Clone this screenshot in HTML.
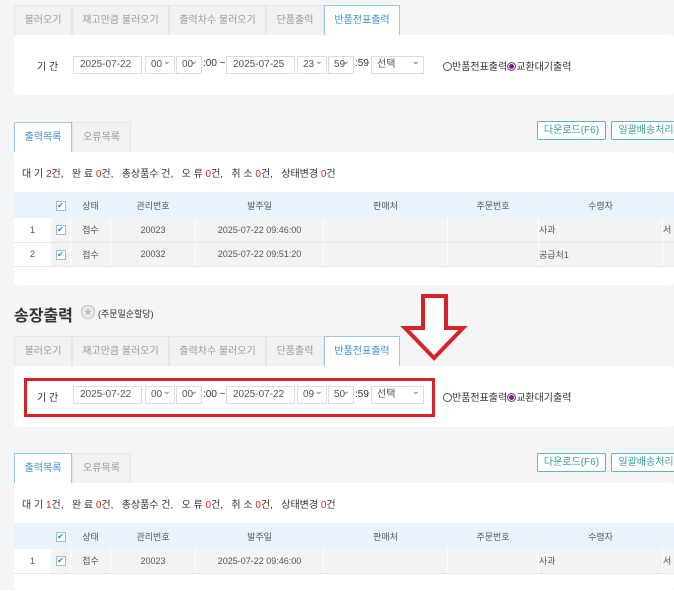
<!DOCTYPE html>
<html><head><meta charset="utf-8"><style>
*{margin:0;padding:0;box-sizing:border-box}
body{width:674px;height:600px;overflow:hidden;background:#fff;font-family:"Liberation Sans","Noto Sans CJK KR",sans-serif;font-size:10px;color:#333;position:relative}
.a{position:absolute}
.bg{background:#f4f5f7}
.tab{position:absolute;height:30px;border:1px solid #e3e5e8;border-bottom:none;background:#f1f2f4;color:#999;font-size:10px;line-height:30px;text-align:center}
.tab.on{background:#fff;color:#3a8fd0;border-color:#9cc6e6}
.panel{position:absolute;background:#fff;border-radius:3px}
.inp{position:absolute;height:18px;border:1px solid #dcdcdc;background:#fff;color:#555;font-size:10px;line-height:16px;padding-left:6px}
.sel{position:absolute;height:18px;border:1px solid #dcdcdc;background:#fff;color:#555;font-size:10px;line-height:16px;padding-left:5px}
.sel:after{content:"⌄";position:absolute;right:3px;top:-3px;font-size:10px;color:#777}
.btn{position:absolute;height:19px;border:1px solid #5fb8b4;color:#3a9a96;background:#fff;font-size:10px;line-height:17px;text-align:center;border-radius:2px}
.r{color:#d22}
table{position:absolute;border-collapse:collapse;font-size:9px;color:#555;table-layout:fixed}
th{background:#eaf3fb;height:26px;font-weight:normal;color:#555;border-left:1px solid #f0f5fa}
td{height:24px;text-align:center;background:#f3f3f3;border-bottom:1px solid #e6e6e6;border-left:1px solid #fff}
td.w{background:#fff}
.cb{display:inline-block;width:10px;height:10px;border:1px solid #9cbbd6;background:#fff;color:#3a7fc0;font-size:8px;line-height:8px;text-align:center}
.rad{display:inline-block;width:9px;height:9px;border:1px solid #555;border-radius:50%;vertical-align:-1px}
</style></head><body>
<div class="a bg" style="left:0;top:0;width:674px;height:590px"></div>

<!-- section 1 -->
<div class="tab" style="left:14px;top:5px;width:58px">불러오기</div>
<div class="tab" style="left:72px;top:5px;width:97px">재고만큼 불러오기</div>
<div class="tab" style="left:169px;top:5px;width:97px">출력차수 불러오기</div>
<div class="tab" style="left:266px;top:5px;width:58px">단품출력</div>
<div class="tab on" style="left:324px;top:5px;width:76px">반품전표출력</div>
<div class="panel" style="left:14px;top:35px;width:660px;height:60px"></div>
<div class="a" style="left:37px;top:58px">기 간</div>
<div class="inp" style="left:73px;top:56px;width:69px">2025-07-22</div>
<div class="sel" style="left:145px;top:56px;width:30px">00</div>
<div class="a" style="left:176px;top:58px">:</div>
<div class="sel" style="left:176px;top:56px;width:26px">00</div>
<div class="a" style="left:203px;top:58px">:00 ~</div>
<div class="inp" style="left:226px;top:56px;width:69px">2025-07-25</div>
<div class="sel" style="left:297px;top:56px;width:30px">23</div>
<div class="sel" style="left:328px;top:56px;width:26px">59</div>
<div class="a" style="left:355px;top:58px">:59</div>
<div class="sel" style="left:371px;top:56px;width:53px">선택</div>
<div class="a" style="left:443px;top:58px;color:#333"><span class="rad"></span>반품전표출력<span class="rad" style="background:#7a1f8a;box-shadow:inset 0 0 0 1px #fff"></span>교환대기출력</div>

<div class="tab on" style="left:14px;top:122px;width:58px">출력목록</div>
<div class="tab" style="left:72px;top:122px;width:59px">오류목록</div>
<div class="btn" style="left:537px;top:121px;width:69px">다운로드(F6)</div>
<div class="btn" style="left:611px;top:121px;width:70px">일괄배송처리</div>
<div class="panel" style="left:14px;top:152px;width:660px;height:133px"></div>
<div class="a" style="left:22px;top:165px">대 기 <span class="r">2</span>건, &nbsp;&nbsp;완 료 <span class="r">0</span>건, &nbsp;&nbsp;총상품수 건, &nbsp;&nbsp;오 류 <span class="r">0</span>건, &nbsp;&nbsp;취 소 <span class="r">0</span>건, &nbsp;&nbsp;상태변경 <span class="r">0</span>건</div>
<table style="left:14px;top:192px;width:670px">
<colgroup><col width="36"><col width="20"><col width="40"><col width="85"><col width="128"><col width="124"><col width="91"><col width="124"><col width="22"></colgroup>
<tr><th></th><th><span class="cb">✔</span></th><th>상태</th><th>관리번호</th><th>발주일</th><th>판매처</th><th>주문번호</th><th>수령자</th><th></th></tr>
<tr><td class="w">1</td><td><span class="cb">✔</span></td><td>접수</td><td>20023</td><td>2025-07-22 09:46:00</td><td></td><td></td><td style="text-align:left">사과</td><td style="text-align:left">서</td></tr>
<tr><td class="w">2</td><td><span class="cb">✔</span></td><td>접수</td><td>20032</td><td>2025-07-22 09:51:20</td><td></td><td></td><td style="text-align:left">공급처1</td><td></td></tr>
</table>

<!-- section 2 -->
<div class="a" style="left:14px;top:302px;font-size:16px;font-weight:bold;color:#333">송장출력</div>
<div class="a" style="left:81px;top:305px;width:14px;height:14px;border:1px solid #bbb;border-radius:50%;background:#eee;color:#bbb;font-size:9px;line-height:12px;text-align:center">★</div>
<div class="a" style="left:98px;top:307px;font-size:9px">(주문일순할당)</div>
<div class="tab" style="left:14px;top:336px;width:58px">불러오기</div>
<div class="tab" style="left:72px;top:336px;width:97px">재고만큼 불러오기</div>
<div class="tab" style="left:169px;top:336px;width:97px">출력차수 불러오기</div>
<div class="tab" style="left:266px;top:336px;width:58px">단품출력</div>
<div class="tab on" style="left:324px;top:336px;width:76px">반품전표출력</div>
<div class="panel" style="left:14px;top:366px;width:660px;height:61px"></div>
<div class="a" style="left:37px;top:389px">기 간</div>
<div class="inp" style="left:73px;top:386px;width:69px">2025-07-22</div>
<div class="sel" style="left:145px;top:386px;width:30px">00</div>
<div class="sel" style="left:176px;top:386px;width:26px">00</div>
<div class="a" style="left:203px;top:389px">:00 ~</div>
<div class="inp" style="left:226px;top:386px;width:69px">2025-07-22</div>
<div class="sel" style="left:297px;top:386px;width:30px">09</div>
<div class="sel" style="left:328px;top:386px;width:26px">50</div>
<div class="a" style="left:355px;top:389px">:59</div>
<div class="sel" style="left:371px;top:386px;width:53px">선택</div>
<div class="a" style="left:443px;top:389px;color:#333"><span class="rad"></span>반품전표출력<span class="rad" style="background:#7a1f8a;box-shadow:inset 0 0 0 1px #fff"></span>교환대기출력</div>
<div class="a" style="left:24px;top:378px;width:411px;height:39px;border:3px solid #d7222a"></div>
<svg class="a" style="left:400px;top:292px" width="68" height="70"><path d="M23 4 H46 V36 H63 L34 66 L5 36 H23 Z" fill="#fff" stroke="#d7222a" stroke-width="4" stroke-linejoin="miter"/></svg>

<div class="tab on" style="left:14px;top:453px;width:58px">출력목록</div>
<div class="tab" style="left:72px;top:453px;width:59px">오류목록</div>
<div class="btn" style="left:537px;top:453px;width:69px">다운로드(F6)</div>
<div class="btn" style="left:611px;top:453px;width:70px">일괄배송처리</div>
<div class="panel" style="left:14px;top:483px;width:660px;height:107px"></div>
<div class="a" style="left:22px;top:496px">대 기 <span class="r">1</span>건, &nbsp;&nbsp;완 료 <span class="r">0</span>건, &nbsp;&nbsp;총상품수 건, &nbsp;&nbsp;오 류 <span class="r">0</span>건, &nbsp;&nbsp;취 소 <span class="r">0</span>건, &nbsp;&nbsp;상태변경 <span class="r">0</span>건</div>
<table style="left:14px;top:523px;width:670px">
<colgroup><col width="36"><col width="20"><col width="40"><col width="85"><col width="128"><col width="124"><col width="91"><col width="124"><col width="22"></colgroup>
<tr><th></th><th><span class="cb">✔</span></th><th>상태</th><th>관리번호</th><th>발주일</th><th>판매처</th><th>주문번호</th><th>수령자</th><th></th></tr>
<tr><td class="w">1</td><td><span class="cb">✔</span></td><td>접수</td><td>20023</td><td>2025-07-22 09:46:00</td><td></td><td></td><td style="text-align:left">사과</td><td style="text-align:left">서</td></tr>
</table>
</body></html>
